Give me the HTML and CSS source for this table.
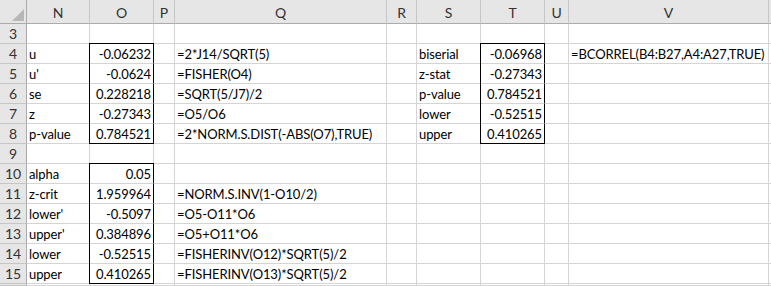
FILE: index.html
```html
<!DOCTYPE html>
<html>
<head>
<meta charset="utf-8">
<link rel="stylesheet" href="styles.css">
</head>
<body>
<div class="frame">
<div class="sheet">
  <div class="corner"><svg width="12" height="12" viewBox="0 0 12 12"><polygon points="12,0 12,12 0,12" fill="#b7b7b7"/></svg></div>
  <div class="ch">N</div><div class="ch">O</div><div class="ch">P</div><div class="ch">Q</div><div class="ch">R</div><div class="ch">S</div><div class="ch">T</div><div class="ch">U</div><div class="ch">V</div><div class="ch last"></div>

  <div class="rh">3</div><div class="c"></div><div class="c"></div><div class="c"></div><div class="c"></div><div class="c"></div><div class="c"></div><div class="c"></div><div class="c"></div><div class="c"></div><div class="c"></div>

  <div class="rh">4</div><div class="c">u</div><div class="c n bx bt">-0.06232</div><div class="c"></div><div class="c">=2*J14/SQRT(5)</div><div class="c"></div><div class="c">biserial</div><div class="c n bx bt">-0.06968</div><div class="c"></div><div class="c">=BCORREL(B4:B27,A4:A27,TRUE)</div><div class="c"></div>

  <div class="rh">5</div><div class="c">u'</div><div class="c n bx">-0.0624</div><div class="c"></div><div class="c">=FISHER(O4)</div><div class="c"></div><div class="c">z-stat</div><div class="c n bx">-0.27343</div><div class="c"></div><div class="c"></div><div class="c"></div>

  <div class="rh">6</div><div class="c">se</div><div class="c n bx">0.228218</div><div class="c"></div><div class="c">=SQRT(5/J7)/2</div><div class="c"></div><div class="c">p-value</div><div class="c n bx">0.784521</div><div class="c"></div><div class="c"></div><div class="c"></div>

  <div class="rh">7</div><div class="c">z</div><div class="c n bx">-0.27343</div><div class="c"></div><div class="c">=O5/O6</div><div class="c"></div><div class="c">lower</div><div class="c n bx">-0.52515</div><div class="c"></div><div class="c"></div><div class="c"></div>

  <div class="rh">8</div><div class="c">p-value</div><div class="c n bx bb">0.784521</div><div class="c"></div><div class="c">=2*NORM.S.DIST(-ABS(O7),TRUE)</div><div class="c"></div><div class="c">upper</div><div class="c n bx bb">0.410265</div><div class="c"></div><div class="c"></div><div class="c"></div>

  <div class="rh">9</div><div class="c"></div><div class="c"></div><div class="c"></div><div class="c"></div><div class="c"></div><div class="c"></div><div class="c"></div><div class="c"></div><div class="c"></div><div class="c"></div>

  <div class="rh">10</div><div class="c">alpha</div><div class="c n bx bt">0.05</div><div class="c"></div><div class="c"></div><div class="c"></div><div class="c"></div><div class="c"></div><div class="c"></div><div class="c"></div><div class="c"></div>

  <div class="rh">11</div><div class="c">z-crit</div><div class="c n bx">1.959964</div><div class="c"></div><div class="c">=NORM.S.INV(1-O10/2)</div><div class="c"></div><div class="c"></div><div class="c"></div><div class="c"></div><div class="c"></div><div class="c"></div>

  <div class="rh">12</div><div class="c">lower'</div><div class="c n bx">-0.5097</div><div class="c"></div><div class="c">=O5-O11*O6</div><div class="c"></div><div class="c"></div><div class="c"></div><div class="c"></div><div class="c"></div><div class="c"></div>

  <div class="rh">13</div><div class="c">upper'</div><div class="c n bx">0.384896</div><div class="c"></div><div class="c">=O5+O11*O6</div><div class="c"></div><div class="c"></div><div class="c"></div><div class="c"></div><div class="c"></div><div class="c"></div>

  <div class="rh">14</div><div class="c">lower</div><div class="c n bx">-0.52515</div><div class="c"></div><div class="c">=FISHERINV(O12)*SQRT(5)/2</div><div class="c"></div><div class="c"></div><div class="c"></div><div class="c"></div><div class="c"></div><div class="c"></div>

  <div class="rh">15</div><div class="c">upper</div><div class="c n bx bb">0.410265</div><div class="c"></div><div class="c">=FISHERINV(O13)*SQRT(5)/2</div><div class="c"></div><div class="c"></div><div class="c"></div><div class="c"></div><div class="c"></div><div class="c"></div>

  <div class="rh"></div><div class="c"></div><div class="c"></div><div class="c"></div><div class="c"></div><div class="c"></div><div class="c"></div><div class="c"></div><div class="c"></div><div class="c"></div><div class="c"></div>
</div>
</div>
</body>
</html>
```

FILE: styles.css
```css
html, body {
  margin: 0;
  padding: 0;
  background: #ffffff;
  overflow: hidden;
}

.frame {
  width: 771px;
  height: 286px;
  overflow: hidden;
}

.sheet {
  display: grid;
  grid-template-columns: 27px 63px 64px 21px 212px 30px 64px 64px 24px 200px 60px;
  grid-template-rows: 24px repeat(13, 20px);
  font-family: Lato, "Liberation Sans", sans-serif;
  font-size: 13px;
  letter-spacing: -0.1px;
  color: #000;
  width: 829px;
}

.sheet > div {
  box-sizing: border-box;
  border-right: 1px solid #d4d4d4;
  border-bottom: 1px solid #d4d4d4;
  white-space: nowrap;
  overflow: visible;
}

.corner {
  background: #e6e6e6;
  border-right: 1px solid #ababab !important;
  border-bottom: 1px solid #ababab !important;
  display: flex;
  align-items: flex-end;
  justify-content: flex-end;
  padding: 0 2px 2px 0;
}

.corner svg {
  display: block;
}

.ch {
  background: #e6e6e6;
  color: #333;
  font-size: 14px;
  border-right: 1px solid #c6c6c6 !important;
  border-bottom: 1px solid #ababab !important;
  display: flex;
  align-items: center;
  justify-content: center;
  padding-top: 1px;
}

.rh {
  background: #e6e6e6;
  color: #333;
  font-size: 14px;
  border-right: 1px solid #ababab !important;
  border-bottom: 1px solid #c6c6c6 !important;
  display: flex;
  align-items: flex-end;
  justify-content: center;
  padding-bottom: 1px;
  line-height: 16px;
}

.c {
  display: flex;
  align-items: flex-end;
  padding: 0 2px 1px 2px;
  line-height: 16px;
}

.n {
  justify-content: flex-end;
}

.bx {
  border-right-color: #000 !important;
  box-shadow: -1px 0 0 #000;
}

.bx.bt {
  box-shadow: -1px 0 0 #000, -1px -1px 0 #000, 0 -1px 0 #000;
}

.bb {
  border-bottom-color: #000 !important;
}
```
